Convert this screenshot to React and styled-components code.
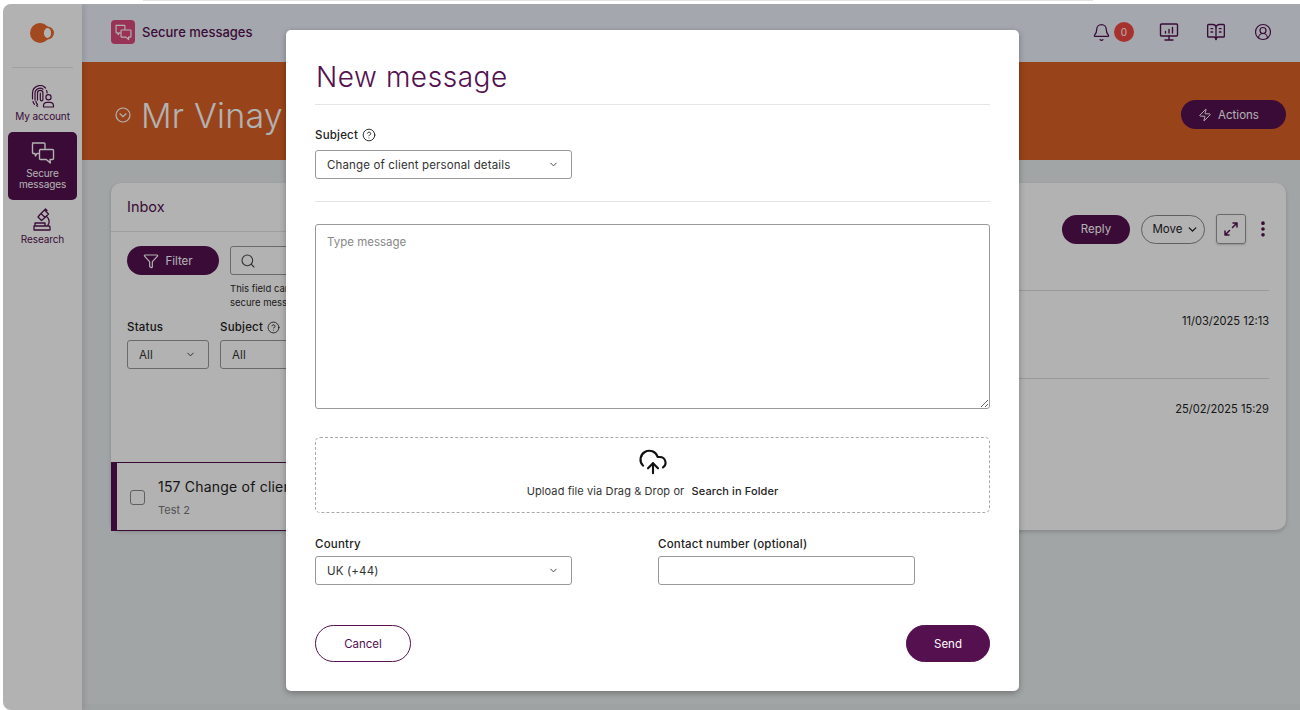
import React from 'react';
import styled, { createGlobalStyle } from 'styled-components';
import {
  Bell, BookOpenText, ChevronDown, CircleHelp, CircleUserRound, CloudUpload, EllipsisVertical,
  Funnel, Search, Zap,
} from 'lucide-react';

const PLUM = '#54104f';
const INK = '#2b2b2b';

const GlobalStyle = createGlobalStyle`
  html, body { margin: 0; height: 100%; background: #fff; overflow: hidden; }
  * { box-sizing: border-box; }
  body { font-family: Inter, "Liberation Sans", sans-serif; color: ${INK}; }
`;

const Page = styled.div`
  width: 1300px;
  height: 710px;
  display: flex;
  flex-direction: column;
  padding-left: 3px;
`;

const TopEdge = styled.div`
  flex: none;
  width: 950px;
  height: 1px;
  margin: 0 0 3px 140px;
  background: #e4e4e4;
`;

const Frame = styled.div`
  position: relative;
  flex: 1;
  min-height: 0;
  display: flex;
  overflow: hidden;
  border-radius: 8px 0 0 8px;
  background: #e8eded;
`;

const Sidebar = styled.aside`
  flex: 0 0 79px;
  display: flex;
  flex-direction: column;
  align-items: center;
  background: #fff;
  box-shadow: 2px 0 6px rgba(0, 0, 0, 0.12);
  z-index: 1;
`;

const LogoBox = styled.div`
  align-self: stretch;
  height: 64px;
  margin: 0 9px 17px;
  display: flex;
  align-items: center;
  justify-content: center;
  padding-bottom: 6px;
  border-bottom: 1px solid #e6e6e6;
`;

const NavItem = styled.div`
  width: 69px;
  display: flex;
  flex-direction: column;
  align-items: center;
  border-radius: 5px;
  text-align: center;
  font-size: 10px;
  line-height: 11px;
  letter-spacing: -0.1px;
  color: ${p => (p.$active ? '#fff' : PLUM)};
  background: ${p => (p.$active ? PLUM : 'transparent')};
  padding: ${p => (p.$active ? '9px 0 10px' : '0')};
  margin-bottom: ${p => p.$gap || 0}px;
  svg { margin-bottom: 3px; }
`;

const Main = styled.div`
  flex: 1;
  display: flex;
  flex-direction: column;
  min-width: 0;
`;

const TopBar = styled.header`
  height: 58px;
  flex: none;
  display: flex;
  align-items: center;
  padding: 0 28px 2px 29px;
  background: #edf0fb;
`;

const AppBadge = styled.div`
  width: 24px;
  height: 24px;
  border-radius: 4px;
  background: #dc4a7c;
  display: flex;
  align-items: center;
  justify-content: center;
  margin-right: 7px;
`;

const AppTitle = styled.div`
  flex: 1;
  font-size: 13px;
  font-weight: 500;
  color: ${PLUM};
`;

const TopIcons = styled.div`
  display: flex;
  align-items: center;
  color: ${PLUM};
`;

const BellGroup = styled.div`
  display: flex;
  align-items: center;
  gap: 3px;
  margin-right: 25px;
`;

const Count = styled.span`
  width: 20px;
  height: 20px;
  border-radius: 50%;
  background: #f0473f;
  color: #fff;
  font-size: 10px;
  display: flex;
  align-items: center;
  justify-content: center;
`;

const TopIcon = styled.div`
  display: flex;
  margin-left: ${p => p.$gap || 0}px;
`;

const Hero = styled.section`
  height: 98px;
  flex: none;
  display: flex;
  align-items: center;
  justify-content: space-between;
  padding: 7px 14px 0 33px;
  background: #dc6128;
  color: #fff;
`;

const HeroName = styled.div`
  display: flex;
  align-items: center;
  gap: 10px;
  padding-top: 1px;
  font-size: 34px;
  font-weight: 300;
  letter-spacing: 0.2px;
`;

const Pill = styled.button`
  display: inline-flex;
  align-items: center;
  justify-content: center;
  gap: 6px;
  height: 29px;
  width: ${p => p.$width}px;
  padding: 0 ${p => (p.$iconed ? 10 : 0)}px 0 0;
  border: 0;
  border-radius: 15px;
  background: ${PLUM};
  color: #fff;
  font: 400 11.5px Inter, sans-serif;
`;

const Content = styled.main`
  flex: 1;
  padding: 23px 14px 0 29px;
  background: #e8eded;
`;

const FootStrip = styled.div`
  flex: none;
  height: 6px;
  background: #e3e8e8;
`;

const Card = styled.div`
  height: 347px;
  display: flex;
  background: #fff;
  border-radius: 10px;
  box-shadow: 0 2px 4px rgba(0, 0, 0, 0.18);
`;

const ListPane = styled.div`
  flex: 0 0 420px;
  display: flex;
  flex-direction: column;
`;

const InboxHead = styled.div`
  height: 49px;
  padding: 0 16px 2px;
  display: flex;
  align-items: center;
  border-bottom: 1px solid #e2e2e2;
  font-size: 14.5px;
  color: ${PLUM};
`;

const Filters = styled.div`
  padding: 14px 16px 0;
  display: grid;
  grid-template-columns: 82px 1fr;
  column-gap: 11px;
  font-size: 11px;
`;

const SearchBox = styled.div`
  height: 29px;
  margin-left: 10px;
  border: 1px solid #999;
  border-radius: 3px;
  display: flex;
  align-items: center;
  padding-left: 9px;
  color: #444;
`;

const HelpText = styled.div`
  grid-column: 2;
  margin: 7px 0 0 10px;
  font-size: 9.5px;
  line-height: 14px;
  white-space: nowrap;
`;

const FieldLabel = styled.div`
  display: flex;
  align-items: center;
  gap: 4px;
  font-size: 11.5px;
  font-weight: 500;
  line-height: 14px;
  letter-spacing: 0.2px;
  margin-bottom: ${p => p.$gap || 0}px;
  color: #222;
  svg { color: #222; }
`;

const SelectBox = styled.div`
  height: 29px;
  width: ${p => (p.$width ? `${p.$width}px` : '100%')};
  display: flex;
  align-items: center;
  justify-content: space-between;
  padding: 0 12px 0 11px;
  border: 1px solid #999;
  border-radius: 3px;
  background: #fff;
  font-size: 11.5px;
  letter-spacing: 0.15px;
  color: #333;
`;

const Cell = styled.div`
  margin-top: ${p => p.$top || 0}px;
`;

const MessageItem = styled.div`
  margin-top: auto;
  height: 69px;
  margin-bottom: -1px;
  display: flex;
  align-items: center;
  gap: 13px;
  padding: 1px 0 0 13px;
  border-left: 6px solid ${PLUM};
  border-top: 1px solid ${PLUM};
  border-bottom: 1px solid ${PLUM};
  background: #fff;
  position: relative;
`;

const Check = styled.span`
  width: 15px;
  height: 15px;
  flex: none;
  border: 1.5px solid #888;
  border-radius: 3px;
`;

const MessageTitle = styled.div`
  font-size: 14px;
  letter-spacing: 0.2px;
  color: #222;
  white-space: nowrap;
  margin-bottom: 8px;
`;

const MessageSub = styled.div`
  font-size: 11px;
  color: #777;
`;

const DetailPane = styled.div`
  flex: 1;
  padding: 31px 17px 0 0;
  min-width: 0;
`;

const DetailActions = styled.div`
  height: 30px;
  display: flex;
  align-items: center;
  justify-content: flex-end;
  margin: 0 -4px 46px 0;
  color: ${PLUM};
`;

const OutlinePill = styled.div`
  width: 64px;
  height: 29px;
  margin: 0 11px;
  padding-left: 5px;
  border: 1px solid #888;
  border-radius: 15px;
  display: flex;
  align-items: center;
  justify-content: center;
  gap: 3px;
  font-size: 11.5px;
  color: #222;
`;

const ExpandBtn = styled.div`
  width: 30px;
  height: 30px;
  border: 1px solid #999;
  border-radius: 3px;
  box-shadow: 0 1px 2px rgba(0, 0, 0, 0.2);
  display: flex;
  align-items: center;
  justify-content: center;
  margin-right: 7px;
`;

const DetailRow = styled.div`
  height: 88px;
  padding-top: 23px;
  border-top: 1px solid #ddd;
  text-align: right;
  font-size: 11.1px;
  color: #222;
`;

const Overlay = styled.div`
  position: absolute;
  inset: 0;
  z-index: 5;
  display: flex;
  justify-content: center;
  align-items: flex-start;
  padding: 26px 0 0 2px;
  background: rgba(0, 0, 0, 0.3);
`;

const Modal = styled.div`
  width: 733px;
  height: 661px;
  padding: 0 29px 0 29px;
  display: flex;
  flex-direction: column;
  background: #fff;
  border-radius: 5px;
  box-shadow: 0 2px 6px rgba(0, 0, 0, 0.3);
`;

const ModalTitle = styled.h2`
  margin: 0;
  height: 75px;
  padding: 29px 0 0 1px;
  font-size: 28px;
  line-height: 36px;
  font-weight: 300;
  letter-spacing: 0.55px;
  color: ${PLUM};
  border-bottom: 1px solid #e5e5e5;
`;

const SubjectBlock = styled.div`
  padding: 23px 0 22px;
  border-bottom: 1px solid #e5e5e5;
`;

const MessageInput = styled.textarea`
  display: block;
  width: 675px;
  height: 185px;
  margin: 22px 0 28px;
  padding: 10px 11px;
  border: 1px solid #999;
  border-radius: 3px;
  font: 400 11.5px Inter, sans-serif;
  outline: none;
  &::placeholder { color: #888; }
`;

const DropZone = styled.div`
  width: 675px;
  height: 76px;
  display: flex;
  flex-direction: column;
  align-items: center;
  padding-top: 9px;
  border: 1px dashed #aaa;
  border-radius: 5px;
  color: #111;
`;

const DropText = styled.div`
  margin-top: 7px;
  font-size: 11px;
  letter-spacing: 0.1px;
  color: #333;
  b { font-weight: 500; color: #222; margin-left: 4px; }
`;

const ContactRow = styled.div`
  display: grid;
  grid-template-columns: 343px 257px;
  margin-top: 24px;
`;

const TextInput = styled.input`
  display: block;
  width: 257px;
  height: 29px;
  border: 1px solid #999;
  border-radius: 3px;
  outline: none;
`;

const ModalActions = styled.div`
  width: 675px;
  margin-top: 40px;
  display: flex;
  justify-content: space-between;
`;

const ModalButton = styled.button`
  width: ${p => p.$width}px;
  height: 37px;
  padding: 0;
  border-radius: 19px;
  border: 1px solid ${PLUM};
  background: ${p => (p.$filled ? PLUM : '#fff')};
  color: ${p => (p.$filled ? '#fff' : PLUM)};
  font: 400 11.5px Inter, sans-serif;
`;

const Logo = () => (
  <svg width="25" height="20" viewBox="0 0 25 20">
    <circle cx="10" cy="10" r="10" fill="#e8692c" />
    <circle cx="17.5" cy="10" r="6.5" fill="#e8692c" />
    <ellipse cx="17.5" cy="10" rx="3.6" ry="5" fill="#fff" />
  </svg>
);

const Bubbles = ({ size = 24, color = 'currentColor', sw = 1.4 }) => (
  <svg width={size} height={size} viewBox="0 0 24 24" fill="none" stroke={color} strokeWidth={sw} strokeLinejoin="round" strokeLinecap="round">
    <path d="M1.5 2h11.5a1 1 0 0 1 1 1v4.5M7.5 12.5H6l-1.5 2.5-.5-2.5H2.5a1 1 0 0 1-1-1V3" />
    <path d="M9.5 8.5h12a1 1 0 0 1 1 1v8a1 1 0 0 1-1 1h-2.5l.3 3.5-4-3.5h-5.8a1 1 0 0 1-1-1v-8a1 1 0 0 1 1-1z" />
  </svg>
);

const AccountIcon = () => (
  <svg width="24" height="23" viewBox="0 0 24 23" fill="none" stroke={PLUM} strokeWidth="1.2" strokeLinecap="round" strokeLinejoin="round">
    <path d="M1.5 14V8a7.5 7.5 0 0 1 13-5M15.5 5.5c.4.8.6 1.6.6 2.5M2 16.5c.3 1 .8 2 1.5 2.8M5.5 20.5l1.2.7" />
    <path d="M4 15V8a5 5 0 0 1 8-3.8M6.5 19.5c-1-1-1.6-2.2-1.6-3.5" />
    <path d="M6.5 15V8a2.7 2.7 0 0 1 5.4 0v6.5a1.3 1.3 0 0 1-2.6 0V8" />
    <circle cx="17.5" cy="12.2" r="2.6" />
    <path d="M12.5 22v-1.5a3.5 3.5 0 0 1 3.5-3.2h3a3.5 3.5 0 0 1 3.500 3.2V22z" />
  </svg>
);

const ResearchIcon = () => (
  <svg width="24" height="23" viewBox="0 0 24 23" fill="none" stroke={PLUM} strokeWidth="1.3" strokeLinecap="round" strokeLinejoin="round">
    <path d="m10 5.5 3.5-3.5 4 4-3.5 3.5zM13.5 2l1-1 1.5 1.5" />
    <path d="m9.5 6-2.5 3 3.5 3.5 3-2.5" />
    <path d="M15.5 8.5a6 6 0 0 1 1.5 8.5" />
    <path d="M4 15h10v3H4zM3 18h15a1 1 0 0 1 1 1v3H3z" />
  </svg>
);

const Screen = () => (
  <svg width="20" height="20" viewBox="0 0 20 20" fill="none" stroke="currentColor" strokeWidth="1.4" strokeLinecap="round" strokeLinejoin="round">
    <rect x="1.5" y="2" width="17" height="12" rx="1" />
    <path d="M10 14v4M6 18h8M6.5 11V9.5M10 11V7.5M13.5 11V5.5" />
  </svg>
);

const ExpandArrows = () => (
  <svg width="16" height="16" viewBox="0 0 16 16" fill="none" stroke="currentColor" strokeWidth="1.5" strokeLinecap="round" strokeLinejoin="round">
    <path d="M9.5 6.5 14 2M10 2h4v4M6.5 9.5 2 14M2 10v4h4" />
  </svg>
);

const App = () => (
  <Page>
    <GlobalStyle />
    <TopEdge />
    <Frame>
      <Sidebar>
        <LogoBox><Logo /></LogoBox>
        <NavItem $gap={10}>
          <AccountIcon />
          My account
        </NavItem>
        <NavItem $active $gap={8}>
          <Bubbles color="#fff" />
          Secure<br />messages
        </NavItem>
        <NavItem>
          <ResearchIcon />
          Research
        </NavItem>
      </Sidebar>
      <Main>
        <TopBar>
          <AppBadge><Bubbles size={17} color="#fff" sw={1.6} /></AppBadge>
          <AppTitle>Secure messages</AppTitle>
          <TopIcons>
            <BellGroup>
              <Bell size={19} strokeWidth={1.6} />
              <Count>0</Count>
            </BellGroup>
            <TopIcon><Screen /></TopIcon>
            <TopIcon $gap={27}><BookOpenText size={20} strokeWidth={1.6} /></TopIcon>
            <TopIcon $gap={28}><CircleUserRound size={18} strokeWidth={1.6} /></TopIcon>
          </TopIcons>
        </TopBar>
        <Hero>
          <HeroName>
            <svg width="16" height="16" viewBox="0 0 16 16" fill="none" stroke="currentColor" strokeWidth="1.2">
              <circle cx="8" cy="8" r="7" />
              <path d="M5 6.8 8 9.6l3-2.8" strokeLinecap="round" />
            </svg>
            Mr Vinay
          </HeroName>
          <Pill $width={105} $iconed><Zap size={14} strokeWidth={1.7} />Actions</Pill>
        </Hero>
        <Content>
          <Card>
            <ListPane>
              <InboxHead>Inbox</InboxHead>
              <Filters>
                <Pill $width={92} $iconed><Funnel size={16} strokeWidth={1.8} />Filter</Pill>
                <SearchBox><Search size={16} strokeWidth={1.6} /></SearchBox>
                <HelpText>This field can search<br />secure messages</HelpText>
                <Cell $top={10}>
                  <FieldLabel $gap={6}>Status</FieldLabel>
                  <SelectBox>All <ChevronDown size={11} strokeWidth={2} /></SelectBox>
                </Cell>
                <Cell $top={10}>
                  <FieldLabel $gap={6}>Subject <CircleHelp size={13} strokeWidth={1.6} /></FieldLabel>
                  <SelectBox>All <ChevronDown size={11} strokeWidth={2} /></SelectBox>
                </Cell>
              </Filters>
              <MessageItem>
                <Check />
                <div>
                  <MessageTitle>157 Change of client personal details</MessageTitle>
                  <MessageSub>Test 2</MessageSub>
                </div>
              </MessageItem>
            </ListPane>
            <DetailPane>
              <DetailActions>
                <Pill $width={68}>Reply</Pill>
                <OutlinePill>Move <ChevronDown size={13} strokeWidth={2.6} /></OutlinePill>
                <ExpandBtn><ExpandArrows /></ExpandBtn>
                <EllipsisVertical size={20} strokeWidth={2.4} />
              </DetailActions>
              <DetailRow>11/03/2025 12:13</DetailRow>
              <DetailRow>25/02/2025 15:29</DetailRow>
            </DetailPane>
          </Card>
        </Content>
        <FootStrip />
      </Main>
      <Overlay>
        <Modal>
          <ModalTitle>New message</ModalTitle>
          <SubjectBlock>
            <FieldLabel $gap={8}>Subject <CircleHelp size={14} strokeWidth={1.6} /></FieldLabel>
            <SelectBox $width={257}>Change of client personal details <ChevronDown size={11} strokeWidth={2} /></SelectBox>
          </SubjectBlock>
          <MessageInput placeholder="Type message" />
          <DropZone>
            <CloudUpload size={30} strokeWidth={1.7} />
            <DropText>Upload file via Drag &amp; Drop or <b>Search in Folder</b></DropText>
          </DropZone>
          <ContactRow>
            <div>
              <FieldLabel $gap={5}>Country</FieldLabel>
              <SelectBox $width={257}>UK (+44) <ChevronDown size={11} strokeWidth={2} /></SelectBox>
            </div>
            <div>
              <FieldLabel $gap={5}>Contact number (optional)</FieldLabel>
              <TextInput />
            </div>
          </ContactRow>
          <ModalActions>
            <ModalButton $width={96}>Cancel</ModalButton>
            <ModalButton $width={84} $filled>Send</ModalButton>
          </ModalActions>
        </Modal>
      </Overlay>
    </Frame>
  </Page>
);

export default App;
